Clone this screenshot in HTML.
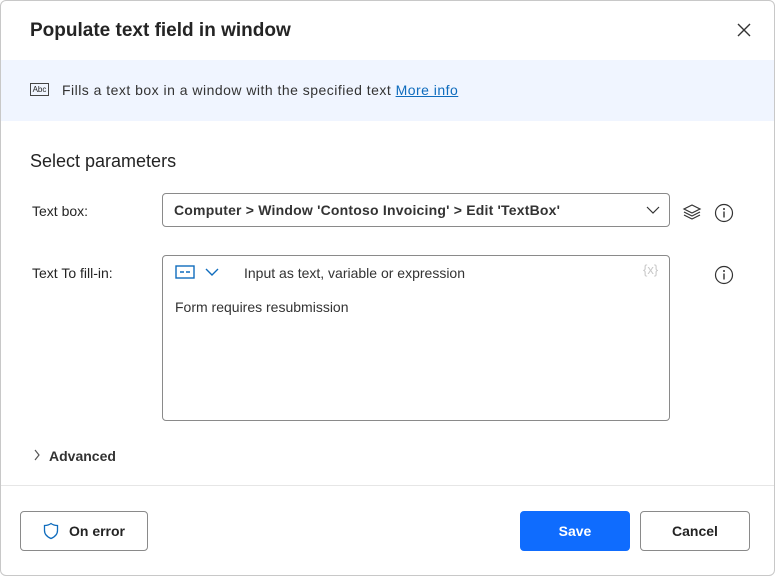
<!DOCTYPE html><html><head><style>
body{margin:0;width:775px;height:576px;background:#fff;font-family:"Liberation Sans",sans-serif;color:#242424;position:relative;overflow:hidden}
.dlg{position:absolute;left:0;top:0;width:775px;height:576px;overflow:hidden;border-radius:6px}
.bd{position:absolute;left:0;top:0;width:775px;height:576px;border:1px solid #c8c8c8;border-radius:6px;box-sizing:border-box}
.a{position:absolute}
.btn{position:absolute;border:1px solid #8a8a8a;border-radius:4px;background:#fff;font-size:14px;font-weight:bold;display:flex;align-items:center;justify-content:center;box-sizing:border-box}
</style></head><body><div class="dlg">
<div class="a" style="left:30px;top:20px;font-size:19px;font-weight:bold">Populate text field in window</div>
<svg class="a" style="left:737px;top:23px" width="14" height="14"><path d="M1 1L13 13M13 1L1 13" stroke="#333" stroke-width="1.4"/></svg>
<div class="a" style="left:0;top:60px;width:775px;height:61px;background:#f0f5ff"></div>
<div class="a" style="left:30px;top:83px;width:19px;height:13px;border:1px solid #444;font-size:8px;line-height:12px;text-align:center;box-sizing:border-box">Abc</div>
<div class="a" style="left:62px;top:82px;font-size:14px;color:#333;letter-spacing:0.48px">Fills a text box in a window with the specified text <span style="color:#0f6cbd;text-decoration:underline">More info</span></div>
<div class="a" style="left:30px;top:151px;font-size:18px">Select parameters</div>
<div class="a" style="left:32px;top:203px;font-size:14px">Text box:</div>
<div class="a" style="left:162px;top:193px;width:508px;height:34px;border:1px solid #8a8a8a;border-radius:4px;box-sizing:border-box"></div>
<div class="a" style="left:174px;top:202px;font-size:14px;font-weight:bold;color:#333;letter-spacing:0.2px">Computer &gt; Window 'Contoso Invoicing' &gt; Edit 'TextBox'</div>
<svg class="a" style="left:646px;top:206px" width="14" height="9"><path d="M1 1L7 7L13 1" stroke="#333" fill="none" stroke-width="1.2"/></svg>
<svg class="a" style="left:682px;top:203px" width="20" height="18"><path d="M10 2L18 6L10 10L2 6Z M2 9L10 13L18 9 M2 12L10 16L18 12" stroke="#333" fill="none" stroke-width="1.2"/></svg>
<svg class="a" style="left:714px;top:203px" width="20" height="20"><circle cx="10" cy="10" r="8.5" stroke="#333" fill="none" stroke-width="1.2"/><path d="M10 8.5V14.5" stroke="#333" stroke-width="1.4"/><circle cx="10" cy="6" r="1" fill="#333"/></svg>
<div class="a" style="left:32px;top:265px;font-size:14px">Text To fill-in:</div>
<div class="a" style="left:162px;top:255px;width:508px;height:166px;border:1px solid #8a8a8a;border-radius:4px;box-sizing:border-box"></div>
<svg class="a" style="left:175px;top:265px" width="48" height="14"><rect x="1" y="1" width="18" height="12" stroke="#0f6cbd" fill="none" stroke-width="1.4"/><path d="M5 7H9M11 7H15" stroke="#0f6cbd" stroke-width="1.4"/><path d="M31 4L37 10L43 4" stroke="#0f6cbd" fill="none" stroke-width="1.4"/></svg>
<div class="a" style="left:244px;top:265px;font-size:14px;color:#333">Input as text, variable or expression</div>
<div class="a" style="left:643px;top:262px;font-size:13px;color:#c8c8c8">{x}</div>
<svg class="a" style="left:714px;top:265px" width="20" height="20"><circle cx="10" cy="10" r="8.5" stroke="#333" fill="none" stroke-width="1.2"/><path d="M10 8.5V14.5" stroke="#333" stroke-width="1.4"/><circle cx="10" cy="6" r="1" fill="#333"/></svg>
<div class="a" style="left:175px;top:299px;font-size:14px;color:#333">Form requires resubmission</div>
<svg class="a" style="left:33px;top:449px" width="8" height="12"><path d="M2 1L6 6L2 11" stroke="#555" fill="none" stroke-width="1.2"/></svg>
<div class="a" style="left:49px;top:448px;font-size:14px;font-weight:bold;color:#333">Advanced</div>
<div class="a" style="left:0;top:485px;width:775px;height:1px;background:#e6e6e6"></div>
<div class="btn" style="left:20px;top:511px;width:128px;height:40px"><svg width="16" height="18" style="margin-right:10px"><path d="M8 1.5C6 3 4 3.5 1.5 3.5V8.5C1.5 12.5 4.5 15 8 16.5C11.5 15 14.5 12.5 14.5 8.5V3.5C12 3.5 10 3 8 1.5Z" stroke="#0f6cbd" fill="none" stroke-width="1.3"/></svg>On error</div>
<div class="btn" style="left:520px;top:511px;width:110px;height:40px;background:#0f6cfe;border-color:#0f6cfe;color:#fff">Save</div>
<div class="btn" style="left:640px;top:511px;width:110px;height:40px">Cancel</div>
</div><div class="bd"></div></body></html>
